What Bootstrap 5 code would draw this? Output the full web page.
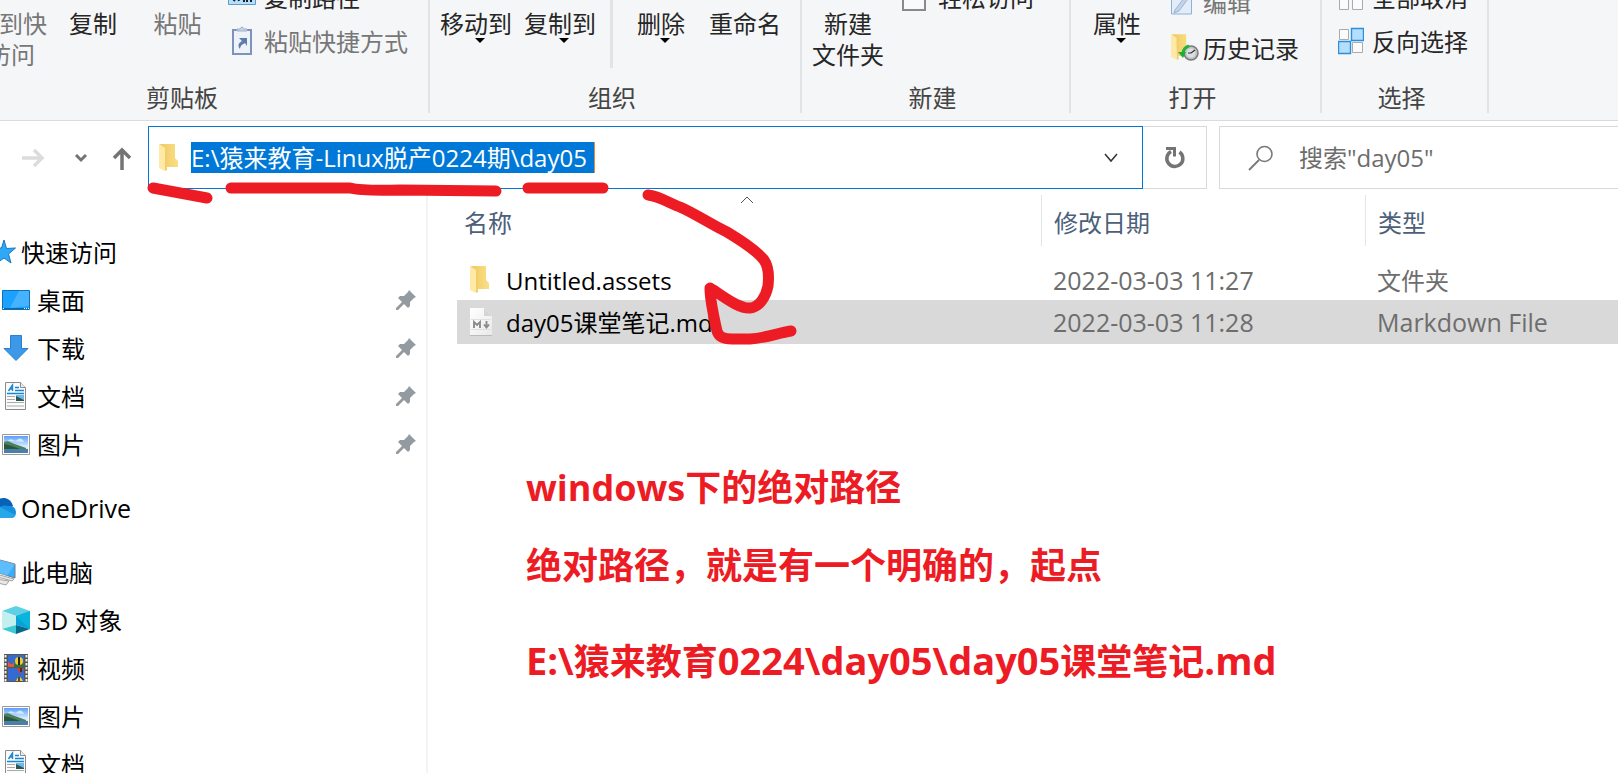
<!DOCTYPE html>
<html lang="zh-CN">
<head>
<meta charset="utf-8">
<meta name="viewport" content="width=device-width, initial-scale=1">
<title>day05</title>
<link href="https://cdn.jsdelivr.net/npm/bootstrap@5.3.0/dist/css/bootstrap.min.css" rel="stylesheet">
<style>
  body { font-family: "Open Sans", "Noto Sans CJK SC", sans-serif; font-size: 24px; line-height: 31px; color: #000; background: #fff; }
  button { font: inherit; color: inherit; background: none; border: 0; padding: 0; }
  svg { display: block; flex: none; }

  /* ribbon */
  .ribbon { height: 121px; background: #f5f6f7; border-bottom: 1px solid #dadbdc; color: #262626; white-space: nowrap; flex: none; }
  .rgroup { height: 113px; border-right: 2px solid #e2e3e4; flex: none; }
  .rbody { height: 82px; }
  .rlabel { color: #444; padding-right: 6px; text-align: center; }
  .g-clip { width: 430px; } .g-org { width: 372px; } .g-new { width: 269px; } .g-open { width: 251px; } .g-sel { width: 167px; }
  .big { padding-top: 8px; text-align: center; flex: none; }
  .big svg { margin: -1px 0 0 calc(50% - 1px); }
  .dim { color: #777; }
  .w-pin { width: 120px; } .w-copy { width: 68px; } .w-paste { width: 101px; }
  .w-org { width: 84px; } .w-newf { width: 92px; }
  .split { width: 3px; height: 68px; background: #e2e3e4; margin: 0 6px 0 8px; }
  .stack { height: 63px; flex: none; }
  .stack button { height: 44px; flex: none; }
  .stack-one { height: 19px; }
  .stack-lg { height: 71px; }
  .stack-lg button { height: 46px; }

  /* address row */
  .navrow { padding-top: 5px; height: 68px; }
  .navbtns { width: 148px; padding-left: 20px; }
  .address { border: 1px solid #0078d7; padding-left: 10px; }
  .path-input { width: 404px; height: 31px; padding: 0; border: 0; border-right: 1px solid #e88a3c; border-radius: 0; background: #0078d7; color: #fff; outline: 0; margin-left: 12px; }
  .refresh { width: 64px; border: 1px solid #d9d9d9; border-left: 0; }
  .search { width: 411px; margin-left: 12px; margin-right: -12px; border: 1px solid #d9d9d9; padding-left: 28px; }
  .search input { border: 0; outline: 0; padding: 0; min-width: 0; margin-left: 25px; }
  .search input::placeholder { color: #6d6d6d; opacity: 1; }

  /* panes */
  .tree { width: 428px; border-right: 2px solid #f4f4f4; margin-top: 6px; padding-top: 33px; flex: none; }
  .tree a { height: 48px; display: flex; align-items: center; color: #000; text-decoration: none; padding-left: 2px; gap: 7px; }
  .tree a.root { padding-left: 0; margin-left: -12px; gap: 5px; }
  .tree .pin { margin-left: auto; margin-right: 10px; }
  .tree ul + ul { margin-top: 16px; }
  .files { padding: 6px 0 0 30px; overflow: hidden; }
  .files table { width: 100%; table-layout: fixed; border-collapse: collapse; }
  .files th { font-weight: 400; color: #4c607a; padding: 0; height: 64px; vertical-align: top; position: relative; }
  .hcell { height: 51px; padding: 3px 0 0 12px; border-left: 1px solid #e5e5e5; display: flex; align-items: center; }
  .hcell.first { border: 0; padding-left: 6px; }
  .sort { position: absolute; top: 1px; left: 282px; }
  .files td { height: 42px; padding: 0 0 0 12px; color: #6d6d6d; }
  .files td.fname { color: #000; }
  .ficon { width: 20px; overflow: visible; }
  .c-name { width: 583px; } .c-date { width: 324px; }
  .latin { font-size: 25px; }
  .picked { background: #d9d9d9; outline: 1px solid #d9d9d9; }
  .notes { padding: 118px 0 0 68px; color: #ed1c24; font-size: 36px; font-weight: 700; line-height: 54px; }
  .notes p { margin: 0 0 24px; }
  .notes p + p { margin-bottom: 42px; }
  .notes span { font-size: 38px; line-height: 1; }
  .ink { position: absolute; left: 0; top: 0; pointer-events: none; }
</style>
</head>
<body class="vh-100 overflow-hidden d-flex flex-column position-relative">

<svg width="0" height="0" class="position-absolute" aria-hidden="true">
  <defs>
    <linearGradient id="sky" x1="0" y1="0" x2="0" y2="1"><stop offset="0" stop-color="#5b9dfa"/><stop offset=".6" stop-color="#d4ecfb"/></linearGradient>
    <linearGradient id="gold" x1="0" x2="1"><stop offset="0" stop-color="#eec964"/><stop offset="1" stop-color="#fbdf85"/></linearGradient>
    <linearGradient id="paper" x1="0" y1="0" x2="1" y2="1"><stop offset="0" stop-color="#fff"/><stop offset="1" stop-color="#e9e9e9"/></linearGradient>
    <symbol id="folder" viewBox="0 0 20 28">
      <path d="M1 0h15v14l3 3v6H8z" fill="url(#gold)"/><path d="M0 0l6 4v23L0 24z" fill="#ffe9a6"/><path d="M6 4v23l2-1V4z" fill="#f3cf6c"/>
    </symbol>
    <symbol id="down" viewBox="0 0 28 28"><path d="M8.500 1.500h11v13h6.500L14 26.500 2 14.500h6.500z" fill="#3d98e8" stroke="#2b7fcb"/></symbol>
    <symbol id="desktop" viewBox="0 0 28 28"><path d="M.5 4.500h27v19H.5z" fill="#1ca1ff" stroke="#0a73b8"/><path d="M17 5h10v15L8 22z" fill="#45b3ff"/><path d="M1 22.500h26" stroke="#0a66a8"/><path d="M1 22.500h1M22 22.500h1M24 22.500h1M26 22.500h1" stroke="#fff"/></symbol>
    <symbol id="doc" viewBox="0 0 28 28">
      <path d="M3.500.5h15l5 5v22h-20z" fill="#fbfbfb" stroke="#8b8b8b"/><path d="M18.500.5v5h5" fill="#eee" stroke="#8b8b8b"/>
      <path d="M6.500 9l4-6v6M8 7h3" fill="none" stroke="#1486d3" stroke-width="1.400"/><path d="M13 5.500h4M13 8.500h9M5 11.500h17" stroke="#1486d3" stroke-width="1.300"/>
      <path d="M5 14.500h8M5 17.500h8M5 20.500h17M5 24h17" stroke="#aaa"/><path d="M14 13h8v6h-8z" fill="#75b6e8"/><path d="M14 14l8 4v1h-8z" fill="#285a55"/>
    </symbol>
    <symbol id="photo" viewBox="0 0 28 28">
      <path d="M.5 4.500h27v20H.5z" fill="#fff" stroke="#999"/><path d="M2 6h24v17H2z" fill="url(#sky)"/><path d="M2 12q4-2 8 1l14 5v1H2z" fill="#4e7f5b"/><path d="M2 14l8 2 8 3H2z" fill="#28563f"/><path d="M2 19h24v4H2z" fill="#4a7fa7"/><path d="M6 11q2-3 5-1t5-1q4-2 6 3z" fill="#fff" opacity=".6"/>
    </symbol>
    <symbol id="pinned" viewBox="0 0 20 20"><path d="M13 0l7 7-2 1-4 4 0 4-2 2-4-4-6 6-2 0 0-2 6-6-4-4 2-2 4 0 4-4z" fill="#939ba1"/></symbol>
    <symbol id="tri" viewBox="0 0 10 5"><path d="M0 0h10L5 5z" fill="#000"/></symbol>
  </defs>
</svg>

<header class="ribbon d-flex overflow-hidden">
  <section class="rgroup g-clip overflow-hidden">
    <div class="rbody d-flex justify-content-end pe-3 me-1">
      <button class="big w-pin dim align-self-start">固定到快<br>速访问</button>
      <button class="big w-copy align-self-start">复制</button>
      <button class="big w-paste dim align-self-start">粘贴</button>
      <div class="stack d-flex flex-column justify-content-end">
        <button class="d-flex align-items-center gap-2">
          <svg width="28" height="20" viewBox="0 0 28 20"><path d="M.5 0h27v17.500H.5z" fill="#b9defa" stroke="#5a9bd0"/><path d="M5 12l2 2M10 11l1 3M15 14h2M18 14h2M22 14h2" stroke="#123" stroke-width="2"/></svg>
          <span>复制路径</span></button>
        <button class="d-flex align-items-center gap-2 dim">
          <svg width="28" height="30" viewBox="0 0 28 30"><path d="M5 4h18v24H5z" fill="#edf2fb" stroke="#7e93b8" stroke-width="2"/><path d="M9 5V3h3q2-4 4 0h3v2z" fill="#c9d2e3" stroke="#9fb0cc"/><path d="M11 12h8v8l-2-3q-5 2-5 6-4-5 2-8z" fill="#607ca9"/></svg>
          <span>粘贴快捷方式</span></button>
      </div>
    </div>
    <div class="rlabel pe-0"><span class="d-inline-block me-5 pe-3">剪贴板</span></div>
  </section>
  <section class="rgroup g-org">
    <div class="rbody d-flex ps-1">
      <button class="big w-org align-self-start">移动到<svg width="10" height="5"><use href="#tri"/></svg></button>
      <button class="big w-org align-self-start">复制到<svg width="10" height="5"><use href="#tri"/></svg></button>
      <div class="split"></div>
      <button class="big w-org align-self-start">删除<svg width="10" height="5"><use href="#tri"/></svg></button>
      <button class="big w-org align-self-start">重命名</button>
    </div>
    <div class="rlabel">组织</div>
  </section>
  <section class="rgroup g-new">
    <div class="rbody d-flex">
      <button class="big w-newf align-self-start">新建<br>文件夹</button>
      <div class="stack stack-one d-flex flex-column justify-content-end">
        <button class="d-flex align-items-center ms-2 gap-2">
          <svg width="24" height="28" viewBox="0 0 24 28"><path d="M1 0h22v27H1z" fill="#fafafa" stroke="#8a8a8a" stroke-width="2"/></svg>
          <span class="ps-1">轻松访问</span></button>
      </div>
    </div>
    <div class="rlabel">新建</div>
  </section>
  <section class="rgroup g-open">
    <div class="rbody d-flex">
      <button class="big w-newf align-self-start">属性<svg width="10" height="5"><use href="#tri"/></svg></button>
      <div class="stack stack-lg d-flex flex-column justify-content-end ps-2">
        <button class="d-flex align-items-center gap-1 dim">
          <svg width="28" height="28" viewBox="0 0 28 28"><path d="M.5 0h20v26H.5z" fill="#e3edf9" stroke="#8fb0d8"/><path d="M4 22L19 2l3 2L8 23l-5 2z" fill="#c3d3ea" stroke="#9fb3d2"/></svg>
          <span>编辑</span></button>
        <button class="d-flex align-items-center gap-1">
          <svg width="28" height="28" viewBox="0 0 28 28"><use href="#folder" width="19" height="27"/><circle cx="20" cy="19" r="7" fill="#bfc3c5" stroke="#777b7d" stroke-width="1.500"/><circle cx="20" cy="19" r="4.500" fill="#dcdedf"/><path d="M20 19l4-3M20 19h-3" fill="none" stroke="#333" stroke-width="1.200"/><path d="M18 12q-5 1-6 7" fill="none" stroke="#25b33b" stroke-width="3"/><path d="M7 18h8l-3 6z" fill="#1eae34"/></svg>
          <span>历史记录</span></button>
      </div>
    </div>
    <div class="rlabel">打开</div>
  </section>
  <section class="rgroup g-sel">
    <div class="rbody d-flex ps-3">
      <div class="stack d-flex flex-column justify-content-end">
        <button class="d-flex align-items-center gap-2">
          <svg width="26" height="28" viewBox="0 0 26 28"><path d="M1.500 12.500h9v14h-9zM14.500 12.500h10v14h-10z" fill="#fbfbfb" stroke="#aaa"/></svg>
          <span>全部取消</span></button>
        <button class="d-flex align-items-center gap-2">
          <svg width="26" height="28" viewBox="0 0 26 28"><path d="M1.500 2.500h9v10h-9zM14.500 15.500h10v10h-10z" fill="#fbfbfb" stroke="#aaa"/><path d="M13.500 1.500h12v12h-12zM.5 14.500h12v12H.5z" fill="#b4defd" stroke="#2b8fdd" stroke-width="1.400"/></svg>
          <span>反向选择</span></button>
      </div>
    </div>
    <div class="rlabel">选择</div>
  </section>
</header>

<div class="navrow d-flex flex-shrink-0">
  <div class="navbtns d-flex align-items-center flex-shrink-0">
    <button aria-label="前进"><svg width="26" height="24" viewBox="0 0 26 24" fill="none" stroke="#dcdcdc"><path d="M2 12h20" stroke-width="3.500"/><path d="M14 4l8 8-8 8" stroke-width="3.500"/></svg></button>
    <button aria-label="最近的位置" class="ms-4 ps-1"><svg width="14" height="10" viewBox="0 0 14 10" fill="none" stroke="#747474" stroke-width="3"><path d="M2 2l5 5 5-5"/></svg></button>
    <button aria-label="上移" class="ms-4"><svg width="20" height="24" viewBox="0 0 20 24" fill="none" stroke="#747474" stroke-width="3.500"><path d="M10 3v21M2 12l8-8 8 8"/></svg></button>
  </div>
  <div class="address d-flex align-items-center flex-grow-1">
    <svg width="20" height="28"><use href="#folder"/></svg>
    <input class="path-input" type="text" aria-label="地址" value="E:\猿来教育-Linux脱产0224期\day05">
    <button class="ms-auto me-4" aria-label="以前的位置"><svg width="14" height="10" viewBox="0 0 14 10" fill="none" stroke="#333" stroke-width="1.500"><path d="M1 1l6 7 6-7"/></svg></button>
  </div>
  <button class="refresh d-flex align-items-center justify-content-center flex-shrink-0" aria-label="刷新">
    <svg width="22" height="24" viewBox="0 0 22 24"><path d="M15.500 6A8 8 0 1 1 7 5.500" fill="none" stroke="#747474" stroke-width="3.500"/><path d="M2 2.500h8.500v8" fill="none" stroke="#747474" stroke-width="3"/></svg>
  </button>
  <div class="search d-flex align-items-center flex-shrink-0">
    <svg width="26" height="26" viewBox="0 0 26 26" fill="none" stroke="#777"><circle cx="16.500" cy="9" r="7.500" stroke-width="1.600"/><path d="M11 15L1 25" stroke-width="1.800"/></svg>
    <input type="search" aria-label="搜索" placeholder='搜索"day05"'>
  </div>
</div>

<div class="d-flex flex-grow-1 overflow-hidden">
  <nav class="tree overflow-hidden">
    <ul class="list-unstyled mb-0">
      <li><a class="root" href="#"><svg width="28" height="28" viewBox="0 0 28 28"><path d="M16 2l2.500 8.500 9-.5-7 6 2.500 9-7-5-7 5 2.500-9-7-6h9z" fill="#2fa8f5" stroke="#1478c4"/></svg>快速访问</a></li>
      <li><a href="#"><svg width="28" height="28"><use href="#desktop"/></svg>桌面<svg class="pin" width="20" height="20"><use href="#pinned"/></svg></a></li>
      <li><a href="#"><svg width="28" height="28"><use href="#down"/></svg>下载<svg class="pin" width="20" height="20"><use href="#pinned"/></svg></a></li>
      <li><a href="#"><svg width="28" height="28"><use href="#doc"/></svg>文档<svg class="pin" width="20" height="20"><use href="#pinned"/></svg></a></li>
      <li><a href="#"><svg width="28" height="28"><use href="#photo"/></svg>图片<svg class="pin" width="20" height="20"><use href="#pinned"/></svg></a></li>
    </ul>
    <ul class="list-unstyled mb-0">
      <li><a class="root latin" href="#"><svg width="28" height="28" viewBox="0 0 28 28"><path d="M6 12q3-9 11-8 6 1 8 8l-9 8z" fill="#0a62b8"/><path d="M8 16q6-6 12-4 7-1 8 6 0 6-5 6H6z" fill="#1590df"/><path d="M12 13l15 8q-1 3-4 3H6z" fill="#28a8ea"/></svg>OneDrive</a></li>
    </ul>
    <ul class="list-unstyled mb-0">
      <li><a class="root" href="#"><svg width="28" height="28" viewBox="0 0 28 28"><path d="M8 1l19 5v14L8 14z" fill="#39adff" stroke="#6e7a84"/><path d="M27 6l-8 12-11-4V1z" fill="#74c8ff" opacity=".6"/><path d="M8 16l18 5-2 2-18-5zM8 21l13 2-3 4-12-3z" fill="#e8e8e8" stroke="#8f8f8f" stroke-width=".8"/></svg>此电脑</a></li>
      <li><a href="#"><svg width="28" height="28" viewBox="0 0 28 28"><path d="M14 0l14 5-14 5L0 5z" fill="#5fd0e3"/><path d="M0 5l14 5v9L0 23z" fill="#c3f0ef"/><path d="M28 5l-14 5v9l14 4z" fill="#06a2d9"/><path d="M14 10l14-5v18z" fill="#0bb4dc"/><path d="M0 23l14-4v9z" fill="#3dc9d6"/><path d="M28 23l-14-4v9z" fill="#046a8b"/></svg>3D 对象</a></li>
      <li><a href="#"><svg width="28" height="28" viewBox="0 0 28 28"><path d="M2 0h24v28H2z" fill="#555"/><path d="M3.500 1v27M24.500 1v27" stroke="#eee" stroke-width="2" stroke-dasharray="2.500 1.500"/><path d="M6 1h16v12H6zM6 14h16v13H6z" fill="#356bd0"/><path d="M6 9l8 1 8-1v4H6z" fill="#347333"/><path d="M6 8l3 2 3-1v4H6z" fill="#e25843"/><circle cx="17" cy="7" r="4" fill="#f5cd20"/><path d="M17 3v8" stroke="#262626" stroke-width="2"/><path d="M15 14h7l-4 6z" fill="#d73d28"/><path d="M14 27q3-8 7 0z" fill="#f5cd20"/><path d="M17 23v4M19 14v4" stroke="#262626" stroke-width="1.500"/></svg>视频</a></li>
      <li><a href="#"><svg width="28" height="28"><use href="#photo"/></svg>图片</a></li>
      <li><a href="#"><svg width="28" height="28"><use href="#doc"/></svg>文档</a></li>
    </ul>
  </nav>

  <main class="files flex-grow-1">
    <table>
      <colgroup><col class="c-name"><col class="c-date"><col></colgroup>
      <thead>
        <tr>
          <th scope="col"><div class="hcell first">名称</div><svg class="sort" width="14" height="8" viewBox="0 0 14 8" fill="none" stroke="#555"><path d="M1 7l6-6 6 6"/></svg></th>
          <th scope="col"><div class="hcell">修改日期</div></th>
          <th scope="col"><div class="hcell">类型</div></th>
        </tr>
      </thead>
      <tbody>
        <tr>
          <td class="fname"><div class="d-flex align-items-center gap-3"><svg class="ficon" height="28"><use href="#folder" width="20" height="28"/></svg><span>Untitled.assets</span></div></td>
          <td class="latin">2022-03-03 11:27</td><td>文件夹</td>
        </tr>
        <tr class="picked">
          <td class="fname"><div class="d-flex align-items-center gap-3">
            <svg class="ficon" height="28"><path d="M0 0h14l8 8v20H0z" fill="url(#paper)"/><path d="M14 0l8 8h-8z" fill="#d5d5d5"/><path d="M0 27.500h22" stroke="#bbb"/><path d="M1 11.500h20M1 21.500h20" stroke="#e0e0e0"/><path d="M4 20v-6l3 3 3-3v6M16.500 13v6M14 16.500l2.500 3 2.500-3" fill="none" stroke="#8c8c8c" stroke-width="1.900"/></svg>
            <span>day05课堂笔记.md</span></div></td>
          <td class="latin">2022-03-03 11:28</td><td class="latin">Markdown File</td>
        </tr>
      </tbody>
    </table>
    <div class="notes text-nowrap">
      <p>windows下的绝对路径</p>
      <p>绝对路径，就是有一个明确的，起点</p>
      <p><span>E:\</span>猿来教育<span>0224\day05\day05</span>课堂笔记<span>.md</span></p>
    </div>
  </main>
</div>

<!-- hand-drawn marks over the window -->
<svg class="ink" width="820" height="360" viewBox="0 0 820 360" fill="none" stroke="#ed1c24" stroke-width="11" stroke-linecap="round" stroke-linejoin="round" aria-hidden="true">
  <path d="M153 188L207 198M231 188H350Q362 191 400 190L496 191M528 188H603"/>
  <path d="M648 195C660 196 672 205 680 207C696 214 710 224 727 232C742 241 757 251 764 260C769 267 769 277 768 286C766 296 760 307 750 308C738 309 722 295 710 288C710 300 714 318 717 331C719 338 725 339 732 339H750C766 338 778 333 791 331"/>
</svg>
<script src="https://cdn.jsdelivr.net/npm/bootstrap@5.3.0/dist/js/bootstrap.bundle.min.js"></script>
</body>
</html>
